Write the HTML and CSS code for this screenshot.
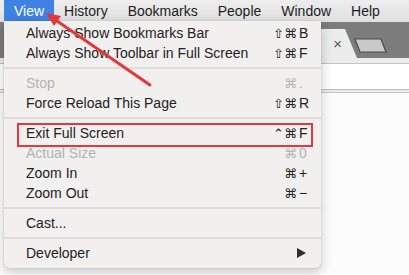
FILE: index.html
```html
<!DOCTYPE html>
<html>
<head>
 <title>View menu</title>
 <link rel="stylesheet" href="styles.css">
</head>
<body>
 <div class="menubar">
  <span class="menubar-item active">View</span>
  <span class="menubar-item">History</span>
  <span class="menubar-item">Bookmarks</span>
  <span class="menubar-item">People</span>
  <span class="menubar-item">Window</span>
  <span class="menubar-item">Help</span>
 </div>

 <!-- fenetre du navigateur derriere le menu -->
 <div class="browser">
  <div class="tabstrip">
   <div class="tab"><span class="tab-close">×</span></div>
   <svg class="tab-new" width="34" height="15" viewBox="0 0 34 15">
    <polygon points="1,1 27,1 32,14 6,14" fill="#c9c9c9" stroke="#4a4a4a" stroke-width="1.2"/>
   </svg>
  </div>
  <div class="toolbar"></div>
  <div class="omnibox-row"></div>
  <div class="bookmarks-bar"></div>
  <div class="page"></div>
 </div>

 <!-- menu deroulant View -->
 <div class="menu">
  <div class="item"><span class="label">Always Show Bookmarks Bar</span><span class="mods">⇧⌘</span><span class="key">B</span></div>
  <div class="item"><span class="label">Always Show Toolbar in Full Screen</span><span class="mods">⇧⌘</span><span class="key">F</span></div>
  <div class="sep"></div>
  <div class="item disabled"><span class="label">Stop</span><span class="mods">⌘</span><span class="key">.</span></div>
  <div class="item"><span class="label">Force Reload This Page</span><span class="mods">⇧⌘</span><span class="key">R</span></div>
  <div class="sep"></div>
  <div class="item"><span class="label">Exit Full Screen</span><span class="mods">⌃⌘</span><span class="key">F</span></div>
  <div class="item disabled"><span class="label">Actual Size</span><span class="mods">⌘</span><span class="key">0</span></div>
  <div class="item"><span class="label">Zoom In</span><span class="mods">⌘</span><span class="key">+</span></div>
  <div class="item"><span class="label">Zoom Out</span><span class="mods">⌘</span><span class="key">−</span></div>
  <div class="sep"></div>
  <div class="item"><span class="label">Cast...</span></div>
  <div class="sep"></div>
  <div class="item"><span class="label">Developer</span><span class="submenu-arrow"></span></div>
 </div>

 <!-- annotations rouges -->
 <div class="mark-box"></div>
 <svg class="mark-arrow" width="409" height="275" viewBox="0 0 409 275">
  <line x1="150" y1="85" x2="57" y2="21" stroke="#e4373b" stroke-width="3" stroke-linecap="round"/>
  <polygon points="46,13 61,16 54,26" fill="#e4373b"/>
 </svg>
</body>
</html>
```

FILE: styles.css
```css
/* Style général */
html {
 overflow: hidden;
}
body {
 margin: 0;
 width: 409px;
 height: 275px;
 overflow: hidden;
 position: relative;
 background-color: #fff;
 font-family: "Liberation Sans", Arial, "DejaVu Sans", sans-serif;
 font-size: 14px;
 color: #222;
}
/* Barre de menu */
.menubar {
 height: 22px;
 display: flex;
 align-items: stretch;
 padding-left: 4px;
 background: linear-gradient(#ededed, #e0e0e0);
}
.menubar-item {
 display: flex;
 align-items: center;
 padding: 0 10px 1px;
 color: #1d1d1d;
}
.menubar-item.active {
 background-color: #3f82e3;
 color: #fff;
}
/* Fenetre du navigateur */
.tabstrip {
 height: 36px;
 background-color: #7c7c7c;
 display: flex;
 align-items: flex-end;
 padding-left: 190px;
}
.tab {
 width: 167px;
 height: 29px;
 box-sizing: border-box;
 background-color: #ececec;
 clip-path: polygon(0 0, calc(100% - 12px) 0, 100% 100%, 0 100%);
 display: flex;
 justify-content: flex-end;
 align-items: center;
 padding: 0 15px 0 0;
}
.tab-close {
 font-size: 15px;
 color: #555;
}
.tab-new {
 margin: 0 0 5px -3px;
}
.toolbar {
 height: 5px;
 background-color: #ececec;
 border-bottom: 1px solid #c4c4c4;
}
.omnibox-row {
 height: 25px;
 background-color: #fff;
 border-bottom: 1px solid #bdbdbd;
}
.bookmarks-bar {
 height: 2px;
 background-color: #ececec;
 border-bottom: 1px solid #c8c8c8;
}
.page {
 height: 180px;
 background-color: #fcfcfc;
}
/* Menu deroulant */
.menu {
 position: absolute;
 left: 4px;
 top: 21px;
 width: 317px;
 box-sizing: border-box;
 padding: 2px 0 5px;
 background-color: #f2efef;
 border-radius: 0 0 5px 5px;
 box-shadow: 0 4px 12px rgba(0, 0, 0, 0.22), 0 0 1px rgba(0, 0, 0, 0.35);
}
.item {
 height: 20px;
 display: flex;
 align-items: center;
 padding: 0 12px 0 22px;
 color: #222;
}
.item .label {
 flex: 1;
}
.item .mods {
 font-family: "DejaVu Sans", sans-serif;
 font-size: 13px;
 text-align: right;
}
.item .key {
 width: 10px;
 margin-left: 2px;
}
.item.disabled {
 color: #b4b2b2;
}
.sep {
 height: 10px;
 display: flex;
 align-items: center;
}
.sep::after {
 content: "";
 flex: 1;
 height: 2px;
 background-color: #dfdbdb;
}
.submenu-arrow {
 width: 0;
 height: 0;
 margin-right: 3px;
 border-top: 5px solid transparent;
 border-bottom: 5px solid transparent;
 border-left: 9px solid #2e2e2e;
}
/* Annotations */
.mark-box {
 position: absolute;
 left: 17px;
 top: 123px;
 width: 296px;
 height: 24px;
 box-sizing: border-box;
 border: 2px solid #e03a3e;
}
.mark-arrow {
 position: absolute;
 left: 0;
 top: 0;
 pointer-events: none;
}
```
